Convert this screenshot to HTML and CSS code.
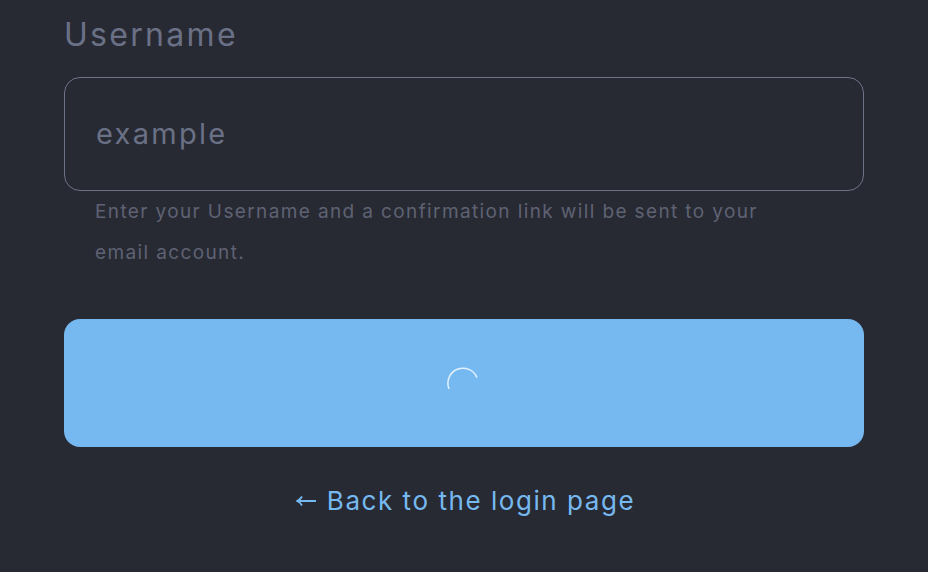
FILE: index.html
```html
<!DOCTYPE html>
<html lang="en">
<head>
<meta charset="utf-8">
<title>Reset password</title>
<link rel="stylesheet" href="styles.css">
</head>
<body>
<main class="form">
  <label class="label" for="username">Username</label>
  <div class="input" id="username"><span class="placeholder">example</span></div>
  <p class="hint">Enter your Username and a confirmation link will be sent to your email account.</p>
  <button class="submit" type="button" aria-label="Loading">
    <svg class="spinner" width="40" height="40" viewBox="0 0 40 40" aria-hidden="true">
      <path d="M5 26A15 15 0 0 1 33 14.6" fill="none" stroke="#ffffff" stroke-opacity="0.8" stroke-width="1.5"/>
    </svg>
  </button>
  <a class="back" href="#">
    <svg class="arrow" width="20" height="12" viewBox="0 0 20 12" aria-hidden="true">
      <path d="M1 6H20M6 1.5C5 3.5 3.2 5.2 1 6C3.2 6.8 5 8.5 6 10.5" fill="none" stroke="currentColor" stroke-width="1.8"/>
    </svg>
    <span>Back to the login page</span>
  </a>
</main>
</body>
</html>
```
FILE: styles.css
```css
* { box-sizing: border-box; }
html, body { margin: 0; height: 100%; }
body {
  background: #282a33;
  font-family: Inter, "Open Sans", sans-serif;
  overflow: hidden;
}
.form {
  width: 800px;
  margin-left: 64px;
  display: flex;
  flex-direction: column;
  padding-top: 15px;
}
.label {
  font-size: 32px;
  line-height: 40px;
  letter-spacing: 2.3px;
  color: #6a7186;
  margin-bottom: 22px;
}
.input {
  height: 114px;
  border: 1px solid #6c7288;
  border-radius: 16px;
  padding: 0 30px 2px 31px;
  display: flex;
  align-items: center;
}
.placeholder {
  font-size: 29px;
  letter-spacing: 2.3px;
  color: #6a7186;
}
.hint {
  margin: 0;
  padding: 0 60px 0 31px;
  font-size: 19px;
  line-height: 41px;
  letter-spacing: 1.38px;
  color: #5e6273;
  height: 128px;
}
.submit {
  height: 128px;
  border: 0;
  border-radius: 16px;
  background: #76b9f1;
  display: flex;
  align-items: center;
  justify-content: center;
  padding: 0;
}
.back {
  margin-top: 34px;
  padding-left: 3px;
  display: flex;
  align-items: center;
  justify-content: center;
  gap: 11px;
  font-size: 26px;
  line-height: 40px;
  letter-spacing: 1.55px;
  color: #76b9f1;
  text-decoration: none;
}
```
